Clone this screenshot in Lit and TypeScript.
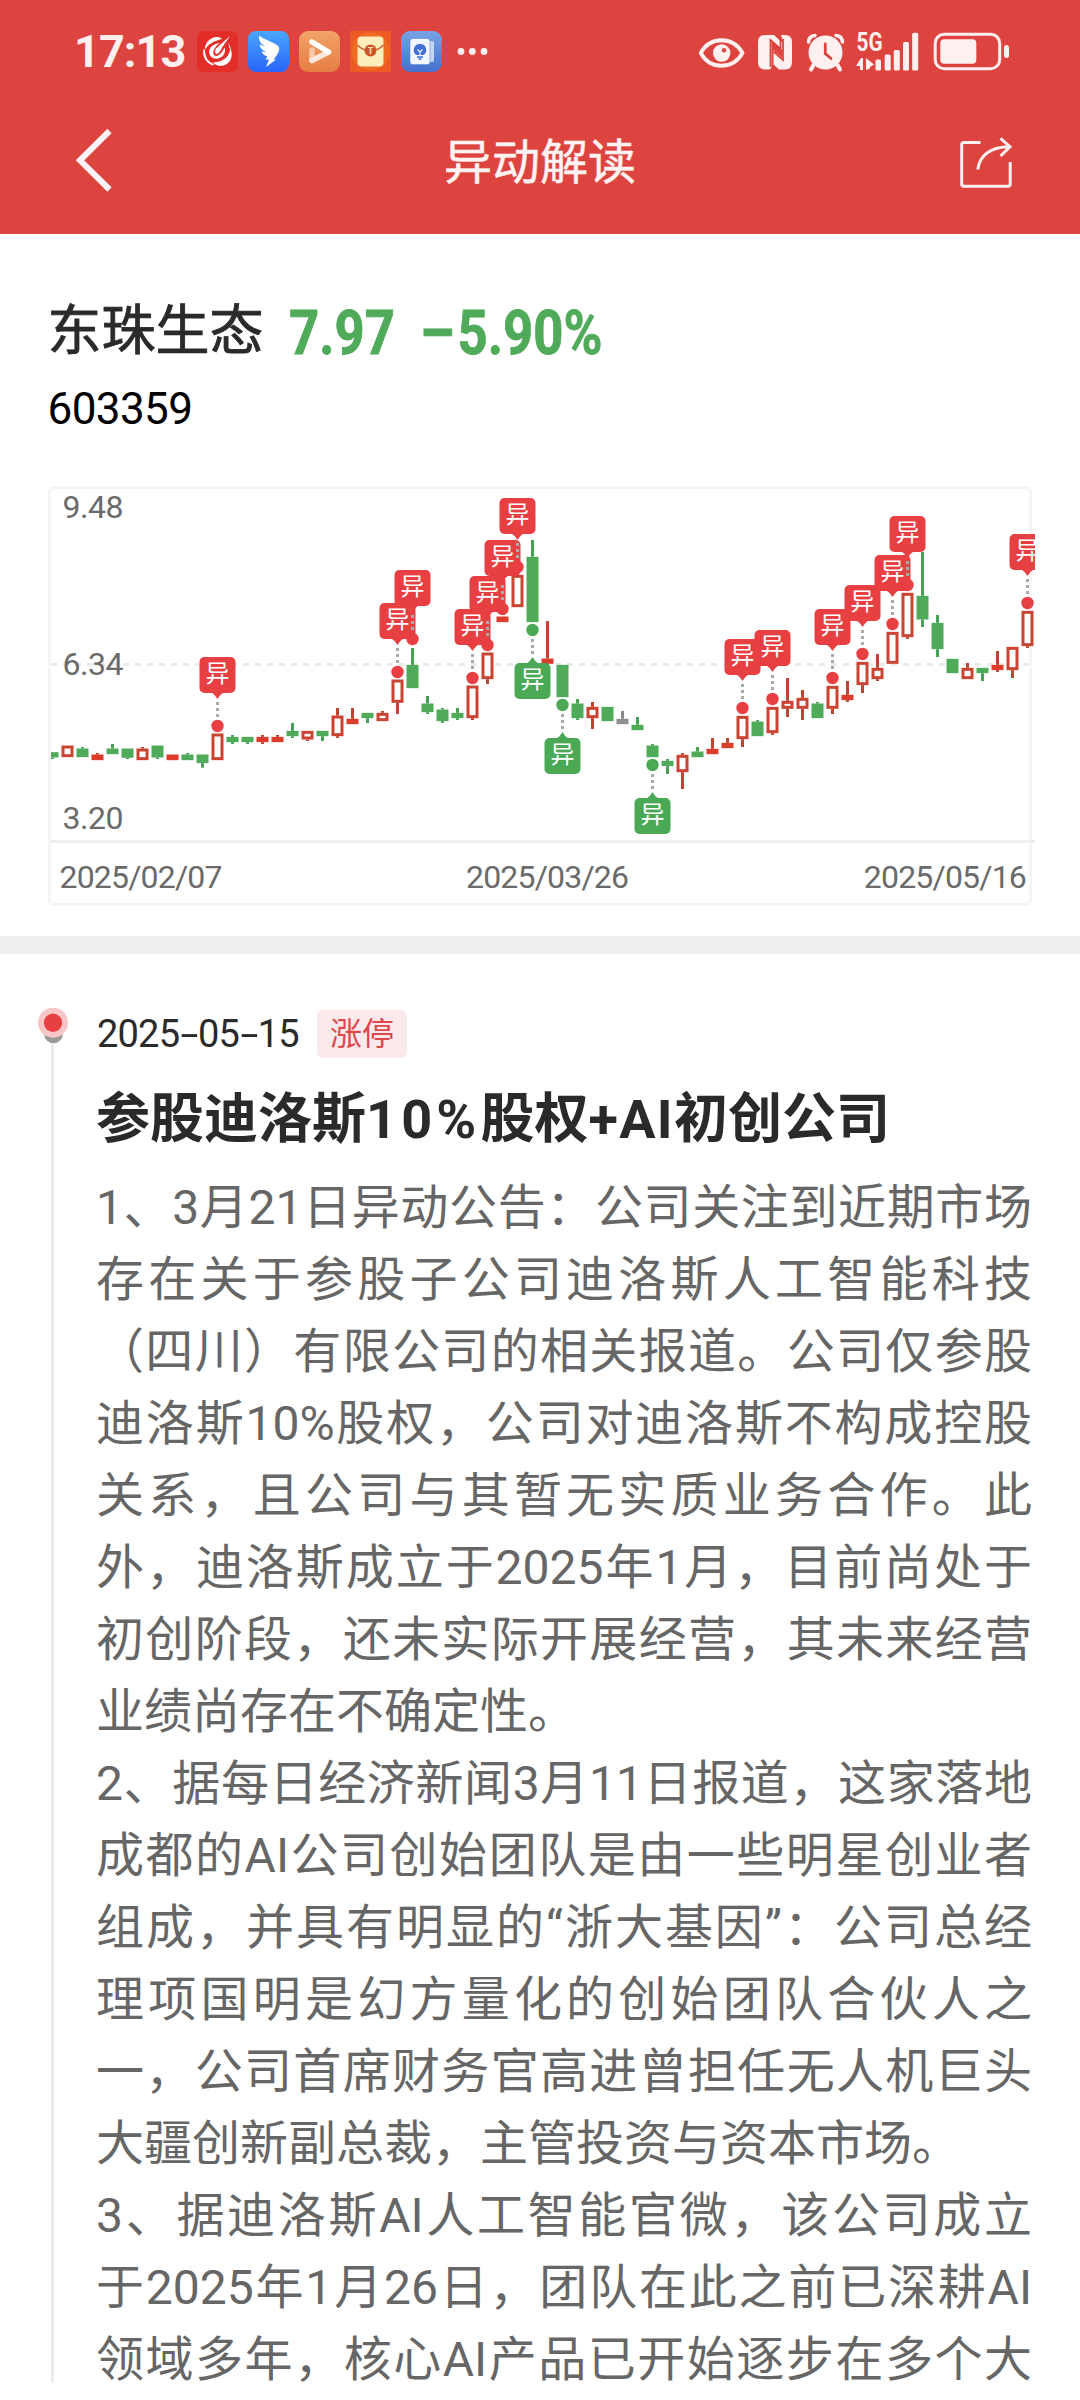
import { LitElement, html, css, svg } from "lit";
import { customElement } from "lit/decorators.js";

type Kind = "up" | "flat" | "down" | "even";
// kind, high, body top, body bottom, low (chart units, a third of a pixel)
type Candle = [Kind, number, number, number, number];

const CANDLES: Candle[] = [
  ["down", 845, 845, 864, 867], ["up", 825, 825, 863, 863], ["down", 831, 834, 863, 863],
  ["flat", 849, 852, 872, 872], ["down", 822, 834, 854, 854], ["down", 834, 834, 865, 867],
  ["up", 831, 834, 872, 872], ["down", 825, 825, 864, 867], ["flat", 852, 852, 872, 872],
  ["down", 849, 852, 872, 872], ["down", 852, 852, 881, 893], ["up", 789, 789, 872, 872],
  ["down", 795, 799, 818, 822], ["down", 799, 799, 818, 822], ["flat", 795, 799, 818, 822],
  ["flat", 795, 799, 818, 818], ["down", 759, 781, 800, 804], ["up", 781, 781, 810, 813],
  ["down", 781, 781, 800, 813], ["up", 714, 735, 800, 804], ["flat", 714, 745, 764, 764],
  ["down", 727, 727, 746, 759], ["up", 723, 727, 755, 755], ["up", 627, 627, 700, 732],
  ["down", 534, 583, 656, 656], ["down", 678, 699, 728, 732], ["down", 714, 717, 755, 759],
  ["down", 714, 727, 746, 750], ["up", 645, 645, 746, 750], ["up", 546, 546, 629, 642],
  ["flat", 438, 438, 458, 458], ["up", 313, 313, 413, 413], ["down", 210, 259, 458, 458],
  ["flat", 453, 564, 583, 583], ["down", 583, 583, 683, 683], ["down", 687, 699, 746, 750],
  ["up", 696, 709, 746, 777], ["down", 709, 709, 755, 755], ["even", 723, 745, 764, 764],
  ["down", 741, 763, 782, 782], ["down", 822, 825, 863, 863], ["down", 867, 871, 890, 912],
  ["up", 849, 853, 908, 957], ["down", 831, 843, 863, 863], ["flat", 804, 835, 854, 854],
  ["flat", 804, 817, 836, 836], ["up", 736, 736, 809, 831], ["down", 750, 753, 800, 800],
  ["up", 709, 709, 791, 795], ["up", 624, 691, 718, 741], ["up", 660, 682, 718, 750],
  ["down", 696, 699, 746, 746], ["up", 646, 646, 718, 732], ["flat", 633, 673, 692, 696],
  ["up", 574, 574, 647, 669], ["up", 552, 592, 629, 633], ["up", 484, 484, 583, 583],
  ["up", 367, 367, 503, 507], ["down", 246, 376, 450, 471], ["down", 435, 457, 539, 561],
  ["down", 565, 565, 611, 611], ["up", 579, 592, 629, 629], ["down", 592, 592, 611, 633],
  ["flat", 543, 583, 602, 606], ["up", 529, 529, 602, 624], ["up", 421, 421, 530, 534],
];

// candle index, dot height, true when the flag hangs below
const FLAGS: [number, number, boolean][] = [
  [11, 768, false], [23, 606, false], [24, 507, false], [28, 624, false], [29, 525, false],
  [30, 417, false], [31, 291, false], [32, 480, true], [34, 705, true], [40, 885, true],
  [46, 714, false], [48, 687, false], [52, 624, false], [54, 552, false], [56, 462, false],
  [57, 345, false], [65, 399, false],
];

const WICK: Record<Kind, string> = { up: "#bd4333", flat: "#bd4333", down: "#4a9f57", even: "#858585" };
const BODY: Record<Kind, string> = { up: "#cb4432", flat: "#dc3c2b", down: "#4faa59", even: "#8f8f8f" };

// The chart svg starts at (48, 486) of the screen; heights are measured from 470.
const cx = (i: number) => 4.5 + i * 15;
const cy = (v: number) => v / 3 - 16;

@customElement("kline-chart")
export class KlineChart extends LitElement {
  static styles = css`
    :host { display: block; }
    svg { display: block; overflow: hidden; }
    .label { font: 400 32px Roboto, "Liberation Sans", sans-serif; fill: #6a6a6a; }
    .flag { font: 400 24px "Noto Sans CJK SC", sans-serif; fill: #fff; text-anchor: middle; }
  `;

  private candle([kind, hi, top, bot, lo]: Candle, i: number) {
    const x = cx(i);
    const y0 = cy(top) + 0.5;
    const y1 = cy(bot) - 0.5;
    return svg`
      ${hi < top ? svg`<rect x=${x - 1.5} y=${cy(hi)} width="3" height=${y0 - cy(hi)} fill=${WICK[kind]}></rect>` : ""}
      ${lo > bot ? svg`<rect x=${x - 1.5} y=${y1} width="3" height=${cy(lo) - y1} fill=${WICK[kind]}></rect>` : ""}
      ${kind === "up"
        ? svg`<rect x=${x - 4.5} y=${y0 + 1.5} width="9" height=${y1 - y0 - 3} fill="#fff" stroke=${BODY.up} stroke-width="3"></rect>`
        : svg`<rect x=${x - 6} y=${y0} width="12" height=${y1 - y0} fill=${BODY[kind]}></rect>`}`;
  }

  private flag([i, dot, below]: [number, number, boolean]) {
    const x = cx(i);
    const y = cy(dot);
    const color = below ? "#4ba956" : "#e83f42";
    const top = below ? y + 33 : y - 69;
    const dashes = below ? [9, 15, 21] : [-24, -18, -12];
    const tip = below
      ? `M${x - 6} ${top + 0.5}Q${x - 2} ${top - 2} ${x} ${top - 6}Q${x + 2} ${top - 2} ${x + 6} ${top + 0.5}Z`
      : `M${x - 6} ${top + 35.5}Q${x - 2} ${top + 38} ${x} ${top + 42}Q${x + 2} ${top + 38} ${x + 6} ${top + 35.5}Z`;
    return svg`
      ${dashes.map((d) => svg`<rect x=${x - 1.5} y=${y + d} width="3" height="3" fill="#aaa"></rect>`)}
      <circle cx=${x} cy=${y} r="6.2" fill=${color}></circle>
      <rect x=${x - 18} y=${top} width="36" height="36" rx="5" fill=${color}></rect>
      <path d=${tip} fill=${color}></path>
      <text class="flag" x=${x} y=${top + 25}>异</text>`;
  }

  render() {
    return html`<svg width="987" height="420" viewBox="0 0 987 420">
      <rect x="1.5" y="1.5" width="981" height="417" rx="4" fill="none" stroke="#f5f5f5" stroke-width="3"></rect>
      <path d="M3 178.5H984" stroke="#ebebeb" stroke-width="3" stroke-dasharray="6 6"></path>
      <path d="M3 355.5H987" stroke="#efefef" stroke-width="3"></path>
      <text class="label" x="14.5" y="32" textLength="61">9.48</text>
      <text class="label" x="14.5" y="188.5" textLength="61">6.34</text>
      <text class="label" x="14.5" y="342.5" textLength="61">3.20</text>
      <text class="label" x="11.5" y="401.5" textLength="163">2025/02/07</text>
      <text class="label" x="418" y="401.5" textLength="163">2025/03/26</text>
      <text class="label" x="815.8" y="401.5" textLength="163">2025/05/16</text>
      <clipPath id="plot"><rect x="3" y="0" width="984" height="420"></rect></clipPath>
      <g clip-path="url(#plot)">
        ${CANDLES.map((c, i) => this.candle(c, i))}
        ${FLAGS.map((f) => this.flag(f))}
      </g>
    </svg>`;
  }
}

@customElement("status-bar")
export class StatusBar extends LitElement {
  static styles = css`
    :host { display: flex; justify-content: space-between; align-items: center; height: 103px; padding: 0 71px 0 74px; box-sizing: border-box; }
    .side { display: flex; align-items: center; }
    .time { font: 700 45px/1 Roboto, sans-serif; color: #fff0f0; width: 123px; letter-spacing: -0.9px; white-space: nowrap; }
    .apps { display: flex; gap: 10px; }
    svg { display: block; overflow: visible; }
    .net { font: 700 25px Roboto, sans-serif; fill: #fff0f0; }
    .mono { font: 700 9px Roboto, sans-serif; fill: #fbe3b0; text-anchor: middle; }
  `;

  render() {
    return html`
      <div class="side">
        <div class="time">17:13</div>
        <div class="apps">
          <svg width="41" height="41" viewBox="0 0 41 41">
            <rect width="41" height="41" rx="7" fill="#e32d28"></rect>
            <g fill="#fff">
              <path d="M25 8C21 4.500 14 6 10 11.500C8.500 14 7.500 16.500 8 18.500C12 12.500 17 10 25 8Z"></path>
              <path d="M6.500 18C5 24 8 32 16 34.500L17 33C11 31 8 26 8 19Z"></path>
              <path d="M16 31.500C21 37 30 35.500 33.500 29C35.500 25 35 20 33 17.500C33 24 28 31 16 31.500Z"></path>
              <path d="M31.500 12L34.500 19L32 16Z"></path>
              <path d="M23 12C15 12.500 11 18 12.500 23C14 28.500 22 29.500 26.500 24C28 22 28.500 19 27.500 16.500C25 22 21 26.500 17.500 24.500C14.500 22.500 17 16 23 12Z"></path>
              <path d="M33 5L19 17.500C17.500 20 18 23 20 23C22.500 22 24 19 25 16.500Z"></path>
            </g>
          </svg>
          <svg width="41" height="41" viewBox="0 0 41 41">
            <defs><linearGradient id="wing" x1="0" y1="0" x2="0" y2="1"><stop offset="0" stop-color="#49a6fb"></stop><stop offset="1" stop-color="#2865fb"></stop></linearGradient></defs>
            <rect width="41" height="41" rx="8" fill="url(#wing)"></rect>
            <path d="M11 4.500C16 8.500 24 10.500 29.500 14.500C32 16.500 31.500 19 30 22C28.500 25 27 27 25.500 28.500H28L18 36L21 28.500H17.500L19.500 25.500C16.500 24.500 14.500 23 13.500 20.500L18 21C14 19 12 16.500 11.500 13.500L17 15.500C12.500 12.500 10.500 9 11 4.500Z" fill="#fff"></path>
          </svg>
          <svg width="41" height="41" viewBox="0 0 41 41">
            <defs><linearGradient id="play" x1="0" y1="0" x2="0" y2="1"><stop offset="0" stop-color="#f2a368"></stop><stop offset="1" stop-color="#e67d42"></stop></linearGradient></defs>
            <rect width="41" height="41" rx="9" fill="url(#play)"></rect>
            <g fill="none" stroke-linecap="round" stroke-width="5.500">
              <path d="M13 19V29.500" stroke="#f6c8a8"></path>
              <path d="M13 29.500L29.500 21" stroke="#fce9dc"></path>
              <path d="M13 11L29.500 21" stroke="#fff"></path>
            </g>
          </svg>
          <svg width="41" height="41" viewBox="0 0 41 41">
            <rect width="41" height="41" fill="#ed5a25"></rect>
            <circle cx="20.500" cy="20.500" r="19" fill="#ef6a22"></circle>
            <rect x="7.500" y="5.500" width="26" height="30" rx="4" fill="#fdeebb"></rect>
            <path d="M7.500 14C11 18 16 19.500 20.500 19.500C25 19.500 30 18 33.500 14" fill="none" stroke="#cf5f30" stroke-width="1.500"></path>
            <circle cx="20.500" cy="19.500" r="6" fill="#cc5426"></circle>
            <text class="mono" x="20.500" y="22.800">T</text>
          </svg>
          <svg width="41" height="41" viewBox="0 0 41 41">
            <defs><linearGradient id="idea" x1="0" y1="0" x2="0" y2="1"><stop offset="0" stop-color="#78a4e6"></stop><stop offset="1" stop-color="#4470cd"></stop></linearGradient></defs>
            <rect width="41" height="41" rx="9" fill="url(#idea)"></rect>
            <rect x="27" y="10" width="6" height="21" rx="2" fill="#c6d7f5"></rect>
            <rect x="9" y="7.500" width="20" height="26" rx="2.500" fill="#f1f6ff" stroke="#5d88d8" stroke-width=".6"></rect>
            <path d="M19 13A6 6 0 0 0 15.500 24H22.500A6 6 0 0 0 19 13Z" fill="#3f6fd0"></path>
            <path d="M16.500 18.500L19 21L21.500 18.500M19 21V24" fill="none" stroke="#f1f6ff" stroke-width="1.200"></path>
            <path d="M16 26H22M17.500 28H20.500" stroke="#3f6fd0" stroke-width="1.400"></path>
          </svg>
        </div>
        <svg width="50" height="10" viewBox="0 0 50 10" fill="#fff0f0">
          <circle cx="19" cy="4.500" r="3.400"></circle><circle cx="30.300" cy="4.500" r="3.400"></circle><circle cx="42" cy="4.500" r="3.400"></circle>
        </svg>
      </div>
      <svg width="310" height="40" viewBox="699 31 310 40" fill="#fff0f0">
        <path d="M700.700 52C710 35 733 35 742.500 52C733 69 710 69 700.700 52Z" fill="none" stroke="#fff0f0" stroke-width="3.800" stroke-linejoin="round"></path>
        <circle cx="721.700" cy="52" r="8.700"></circle><circle cx="724" cy="49.300" r="2.200" fill="#dd4440"></circle>
        <path d="M765 34H774L789 48.500V55L771.500 39.500V66Q771.500 67.500 769 68.500H765Q758 68.500 758 61V41Q758 34 765 34Z"></path>
        <path d="M781 34H785Q792 34 792 41V61Q792 68.500 785 68.500H783L767 55V66L771 69H777Q773 68 773.500 49.500L779 54.500" fill="none"></path>
        <path d="M785 68.500H779L773.500 63.500V49L782 57V38L781 34H785Q792 34 792 41V61Q792 68.500 785 68.500Z"></path>
        <path d="M770.500 66V39L780.500 48V35M773.500 50.500L783 59V38" fill="none" stroke="#dd4440" stroke-width="1.800"></path>
        <circle cx="825.500" cy="51.500" r="17"></circle>
        <path d="M813.500 64L811 68.500M837.500 64L840 68.500" stroke="#fff0f0" stroke-width="4" stroke-linecap="round"></path>
        <path d="M808.500 41Q809 35 815 34.500M842.500 41Q842 35 836 34.500" fill="none" stroke="#fff0f0" stroke-width="3.500" stroke-linecap="round"></path>
        <path d="M825.300 43V52.500L831 57.500" fill="none" stroke="#dd4440" stroke-width="2.800" stroke-linecap="round"></path>
        <text class="net" x="856.500" y="50.300" textLength="26" lengthAdjust="spacingAndGlyphs">5G</text>
        <path d="M863 57V69H860V65H856L861 57ZM866 57L874 63.500L870 66V67.500L866 69Z"></path>
        <rect x="875.500" y="58.500" width="5.500" height="11" rx="1.500"></rect>
        <rect x="884.700" y="53.500" width="6" height="16" rx="1.500"></rect>
        <rect x="893.800" y="49" width="6" height="20.500" rx="1.500"></rect>
        <rect x="903" y="41" width="6" height="28.500" rx="1.500"></rect>
        <rect x="912.200" y="31.700" width="6" height="37.800" rx="1.500"></rect>
        <rect x="935.200" y="33.200" width="64.500" height="34.500" rx="9" fill="none" stroke="#fff0f0" stroke-width="3"></rect>
        <rect x="940.300" y="38.200" width="36" height="24.500" rx="4"></rect>
        <rect x="1004" y="44" width="5" height="13" rx="2.500"></rect>
      </svg>`;
  }
}

const LINES: [string, boolean?][] = [
  ["1、3月21日异动公告：公司关注到近期市场"],
  ["存在关于参股子公司迪洛斯人工智能科技"],
  ["（四川）有限公司的相关报道。公司仅参股"],
  ["迪洛斯10%股权，公司对迪洛斯不构成控股"],
  ["关系，且公司与其暂无实质业务合作。此"],
  ["外，迪洛斯成立于2025年1月，目前尚处于"],
  ["初创阶段，还未实际开展经营，其未来经营"],
  ["业绩尚存在不确定性。", true],
  ["2、据每日经济新闻3月11日报道，这家落地"],
  ["成都的AI公司创始团队是由一些明星创业者"],
  ["组成，并具有明显的“浙大基因”：公司总经"],
  ["理项国明是幻方量化的创始团队合伙人之"],
  ["一，公司首席财务官高进曾担任无人机巨头"],
  ["大疆创新副总裁，主管投资与资本市场。", true],
  ["3、据迪洛斯AI人工智能官微，该公司成立"],
  ["于2025年1月26日，团队在此之前已深耕AI"],
  ["领域多年，核心AI产品已开始逐步在多个大"],
];

@customElement("app-root")
export class AppRoot extends LitElement {
  static styles = css`
    :host { display: flex; flex-direction: column; height: 2400px; overflow: hidden; background: #fff; font-family: Roboto, "Noto Sans CJK SC", sans-serif; text-spacing-trim: space-all; }
    .top { height: 234px; background: #dd4440; flex: none; }
    .nav { display: grid; grid-template-columns: 200px 1fr 200px; align-items: center; height: 120px; }
    .nav svg { display: block; }
    .back { margin-left: 73px; margin-top: -7px; }
    .share { margin-left: 78px; }
    .title { text-align: center; font-size: 48px; line-height: 72px; color: #fff2f2; -webkit-text-stroke: .5px #fff2f2; }
    .stock { flex: none; height: 252px; padding: 59px 48px 0 47.5px; box-sizing: border-box; }
    .quote { display: flex; height: 78px; line-height: 78px; white-space: nowrap; }
    .name { font-size: 54px; color: #2a2a2a; width: 241px; -webkit-text-stroke: .8px #2a2a2a; }
    .num { font-size: 62px; font-weight: 700; color: #4faa59; transform: scaleX(.85); transform-origin: 0 50%; padding-top: 1px; -webkit-text-stroke: .8px #4faa59; }
    .price { width: 130px; }
    .minus { display: inline-block; transform: scaleX(1.25); margin: 0 6px 0 5px; }
    .code { font-size: 44px; line-height: 56px; color: #000; letter-spacing: -.6px; margin-top: 10px; }
    .chart { flex: none; margin-left: 48px; height: 450px; }
    .gap { flex: none; height: 18px; background: #efefef; }
    .feed { flex: none; height: 1446px; display: grid; grid-template-columns: 96px 936px; align-content: start; }
    .rail { height: 1428px; padding: 53px 0 0 37px; box-sizing: border-box; display: flex; flex-direction: column; }
    .rail svg { display: block; flex: none; }
    .stem { width: 3px; flex: 1; margin-left: 14px; background: #ebebeb; }
    .meta { display: flex; align-items: center; margin-top: 56px; height: 48px; }
    .date { font-size: 38px; line-height: 48px; letter-spacing: -.8px; color: #2a2a2a; width: 221px; white-space: nowrap; padding-left: 1px; box-sizing: border-box; }
    .dash { display: inline-block; transform: scaleX(1.7); margin: 0 4.500px; }
    .tag { width: 90px; height: 48px; border-radius: 6px; background: #fae9ea; color: #dc484b; font-size: 32px; line-height: 48px; text-align: center; }
    .head { font-size: 54px; line-height: 72px; font-weight: 700; color: #2a2a2a; margin-top: 26px; white-space: nowrap; }
    .wide { letter-spacing: 4.200px; }
    .mid { letter-spacing: 1.300px; }
    .body { margin-top: 15.500px; color: #666; font-size: 48px; line-height: 72px; }
    .line { height: 72px; white-space: nowrap; text-align: justify; text-align-last: justify; }
    .last { text-align: left; text-align-last: left; }
  `;

  render() {
    return html`
      <div class="top">
        <status-bar></status-bar>
        <div class="nav">
          <svg class="back" width="42" height="68" viewBox="74 125 42 68"><path d="M110.500 130L81 159.300L110.500 188.500" fill="none" stroke="#fff2f2" stroke-width="6"></path></svg>
          <div class="title">异动解读</div>
          <svg class="share" width="60" height="56" viewBox="958 135 60 56" fill="none" stroke="#fff0f0" stroke-width="3">
            <path d="M980.500 142.500H964Q961.700 142.500 961.700 144.800V184Q961.700 186.300 964 186.300H1008Q1010.200 186.300 1010.200 184V162"></path>
            <path d="M977.800 169.500C979.500 155 991 146.700 1009.500 146.700M1000.500 138.300L1010 146.700L1000.500 156"></path>
          </svg>
        </div>
      </div>
      <div class="stock">
        <div class="quote"><div class="name">东珠生态</div><div class="num price">7.97</div><div class="num"><span class="minus">−</span>5.90%</div></div>
        <div class="code">603359</div>
      </div>
      <kline-chart class="chart"></kline-chart>
      <div class="gap"></div>
      <div class="feed">
        <div class="rail">
          <svg width="32" height="37" viewBox="37 1007 32 37">
            <circle cx="53.500" cy="1034" r="9.300" fill="#999"></circle>
            <circle cx="53" cy="1022.700" r="15" fill="#f7c6c7"></circle>
            <circle cx="53" cy="1022.700" r="9.200" fill="#e83f42"></circle>
          </svg>
          <div class="stem"></div>
        </div>
        <div>
          <div class="meta">
            <div class="date">2025<span class="dash">-</span>05<span class="dash">-</span>15</div>
            <div class="tag">涨停</div>
          </div>
          <div class="head">参股迪洛斯<span class="wide">10%</span>股权<span class="mid">+AI</span>初创公司</div>
          <div class="body">${LINES.map(([t, last]) => html`<div class="line ${last ? "last" : ""}">${t}</div>`)}</div>
        </div>
      </div>`;
  }
}
